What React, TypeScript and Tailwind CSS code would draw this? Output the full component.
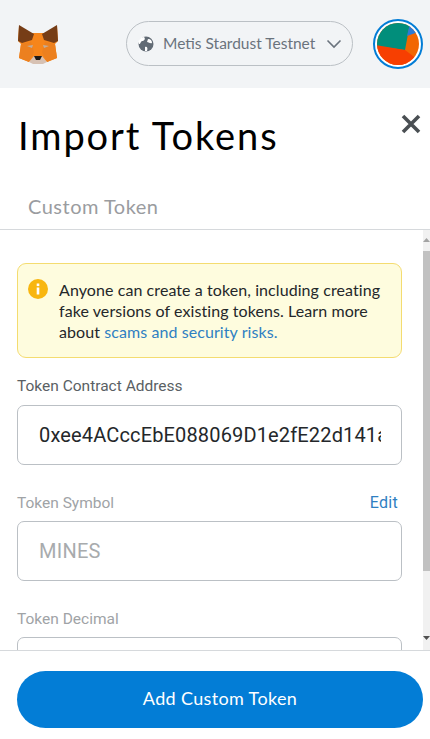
import React from "react";

function Fox() {
  return (
    <svg width="42" height="39" viewBox="0 0 42 39" className="shrink-0">
      <polygon points="2,1 14,8 28,8 40,1 41,16 38,19 40,33 30,37 26,34 16,34 12,37 2,33 4,19 1,16" fill="#f6851b" />
      <polygon points="2,0 17,9 15,15 5,18 1,16" fill="#763d16" />
      <polygon points="40,0 25,9 27,15 37,18 41,16" fill="#763d16" />
      <polygon points="4,19 14,17 17,27 12,37 2,33" fill="#ec801f" />
      <polygon points="38,19 28,17 25,27 30,37 40,33" fill="#ec801f" />
      <polygon points="10,21 16,20 15,23" fill="#c0ad9e" />
      <polygon points="32,21 26,20 27,23" fill="#c0ad9e" />
      <polygon points="12,37 17,31 25,31 30,37 26,39 16,39" fill="#d7c1b3" />
      <polygon points="17,31 25,31 23,35 19,35" fill="#1f1a17" />
    </svg>
  );
}

function Globe() {
  return (
    <svg width="16" height="16" viewBox="0 0 16 16" className="shrink-0">
      <circle cx="8" cy="8" r="7.5" fill="#626b75" />
      <path d="M6 1 C8 3 6 5 4 5 C2 6 3 8 1 8 L0.5 5 L3 1.5 Z" fill="#ffffff" />
      <path d="M10 3 C13 3 14 5 14 7 C12 8 11 6 9 6 Z" fill="#ffffff" />
      <path d="M7 11 C9 10 10 12 9 15 L7 15 Z" fill="#ffffff" />
    </svg>
  );
}

function Avatar() {
  return (
    <div className="w-[50px] h-[50px] rounded-full border-[2px] border-[#037dd6] p-[2px] bg-white shrink-0">
      <svg viewBox="0 0 42 42" className="w-full h-full rounded-full block">
        <rect width="42" height="42" fill="#f26602" />
        <polygon points="-2,14 10,0 33,0 28,27 -2,23" fill="#018e7b" />
        <polygon points="33,0 30,13 44,8 44,0" fill="#2a7bd8" />
        <polygon points="-2,22 28,27 40,36 30,44 0,44" fill="#f73f01" />
      </svg>
    </div>
  );
}

export default function App() {
  return (
    <div className="w-[430px] h-[739px] flex flex-col overflow-hidden bg-white font-['Lato',sans-serif]">
      <header className="h-[88px] bg-[#f2f4f6] flex items-center pl-[17px] pr-[7px] shrink-0">
        <Fox />
        <button className="ml-[67px] w-[228px] h-[45px] rounded-full border border-[#bbc0c5] flex items-center pl-[11px] pr-[10px] mb-[1px]">
          <Globe />
          <span className="ml-[9px] text-[15.5px] text-[#6a737d] whitespace-nowrap">Metis Stardust Testnet</span>
          <svg width="16" height="10" viewBox="0 0 16 10" className="ml-auto shrink-0">
            <path d="M1.5 1.5 L8 8 L14.5 1.5" fill="none" stroke="#6a737d" strokeWidth="1.6" />
          </svg>
        </button>
        <div className="ml-[20px]"><Avatar /></div>
      </header>

      <div className="relative pl-[18px] pt-[22px] h-[93px] shrink-0">
        <h1 className="text-[38px] leading-[50px] tracking-[1.9px] text-[#000000] font-normal">Import Tokens</h1>
        <svg width="20" height="20" viewBox="0 0 20 20" className="absolute right-[9px] top-[26px]">
          <path d="M2 2 L18 18 M18 2 L2 18" stroke="#4a4f53" strokeWidth="3.6" />
        </svg>
      </div>

      <div className="h-[49px] border-b border-[#d6d9dc] pl-[28px] pt-[12px] shrink-0">
        <span className="text-[20px] leading-[26px] tracking-[0.5px] text-[#9a9ca0] block">Custom Token</span>
      </div>

      <div className="flex-1 min-h-0 flex">
        <div className="flex-1 min-w-0 overflow-hidden pl-[17px] pr-[21px] pt-[33px]">
          <div className="h-[95px] rounded-[9px] border border-[#f4dc70] bg-[#fefcde] flex pl-[10px] pr-[8px] pt-[15px]">
            <svg width="20" height="20" viewBox="0 0 20 20" className="shrink-0">
              <circle cx="10" cy="10" r="10" fill="#f8b60f" />
              <rect x="8.7" y="8.5" width="2.6" height="7" fill="#ffffff" />
              <rect x="8.7" y="4.5" width="2.6" height="2.6" fill="#ffffff" />
            </svg>
            <p className="ml-[11px] text-[16px] leading-[21px] tracking-[0.08px] text-[#24272a]">
              Anyone can create a token, including creating fake versions of existing tokens. Learn more about{" "}
              <span className="text-[#2f80c2]">scams and security risks.</span>
            </p>
          </div>

          <div className="mt-[18px] font-['Roboto',sans-serif] text-[15.5px] leading-[20px] text-[#5a5f64]">Token Contract Address</div>
          <input
            readOnly
            value="0xee4ACccEbE088069D1e2fE22d141a8b2c93f"
            className="mt-[9px] w-full h-[60px] rounded-[7px] border border-[#bbc0c5] pl-[21px] pr-[20px] font-['Roboto',sans-serif] text-[20px] tracking-[0.15px] text-[#24272a] bg-white outline-none block"
          />

          <div className="mt-[28px] flex justify-between items-center pr-[4px] font-['Roboto',sans-serif] text-[15.5px] leading-[20px]">
            <span className="text-[#a0a3a6]">Token Symbol</span>
            <span className="text-[#2f80c2] text-[16px] tracking-[0.3px]">Edit</span>
          </div>
          <input
            readOnly
            value="MINES"
            className="mt-[8px] w-full h-[60px] rounded-[7px] border border-[#bbc0c5] pl-[21px] pr-[19px] font-['Roboto',sans-serif] text-[20px] tracking-[0.25px] text-[#a8abad] bg-white outline-none block"
          />

          <div className="mt-[28px] font-['Roboto',sans-serif] text-[15.5px] leading-[20px] text-[#a0a3a6]">Token Decimal</div>
          <input
            readOnly
            value=""
            className="mt-[8px] w-full h-[60px] rounded-[7px] border border-[#bbc0c5] bg-white outline-none block"
          />
        </div>

        <div className="w-[7px] bg-[#f1f1f1] flex flex-col items-center justify-between shrink-0 pt-[8px] pb-[10px] relative">
          <svg width="7" height="4" viewBox="0 0 7 4"><polygon points="3.5,0 7,4 0,4" fill="#a3a3a3" /></svg>
          <svg width="7" height="4" viewBox="0 0 7 4"><polygon points="0,0 7,0 3.5,4" fill="#505050" /></svg>
          <div className="absolute left-0 right-0 top-[21px] h-[320px] bg-[#c1c1c1]" />
        </div>
      </div>

      <footer className="h-[89px] border-t border-[#d6d9dc] bg-white pl-[17px] pr-[7px] pt-[20px] shrink-0">
        <button className="w-full h-[57px] rounded-full bg-[#037dd6] text-white text-[18px] tracking-[0.35px] pb-[2px]">Add Custom Token</button>
      </footer>
    </div>
  );
}
